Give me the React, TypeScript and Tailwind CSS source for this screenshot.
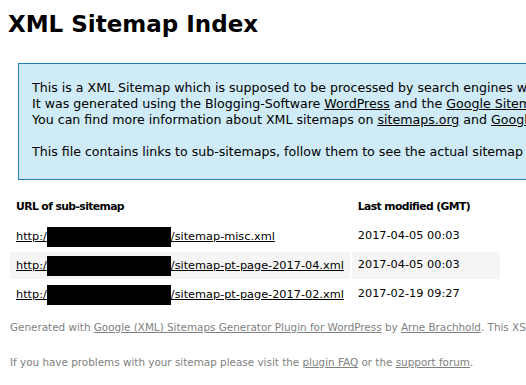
const rows = [
  { file: "sitemap-misc.xml", date: "2017-04-05 00:03", high: false },
  { file: "sitemap-pt-page-2017-04.xml", date: "2017-04-05 00:03", high: true },
  { file: "sitemap-pt-page-2017-02.xml", date: "2017-02-19 09:27", high: false },
];

export default function App() {
  return (
    <div className="w-[526px] h-[385px] overflow-hidden bg-white">
      <div className="w-[1400px] px-2 font-['DejaVu_Sans',sans-serif] text-black">
        <h1 className="pt-[9px] pb-[24px] text-[23px] leading-[30px] font-bold">XML Sitemap Index</h1>

        {/* intro box */}
        <div className="mx-[10px] border border-[#2580b2] bg-[#cfebf7] px-[13px] pt-[16px] pb-[19px] text-[12.6px] leading-[16px] whitespace-nowrap">
          <p>
            This is a XML Sitemap which is supposed to be processed by search engines which follow the XML Sitemap standard like Ask.com, Bing, Google and Yahoo.
            <br />
            It was generated using the Blogging-Software <a className="underline">WordPress</a> and the{" "}
            <a className="underline">Google Sitemap Generator Plugin</a> by <a className="underline">Arne Brachhold</a>.
            <br />
            You can find more information about XML sitemaps on <a className="underline">sitemaps.org</a> and{" "}
            <a className="underline">Google's list of sitemap programs</a>.
          </p>
          <p className="mt-[16px]">
            This file contains links to sub-sitemaps, follow them to see the actual sitemap content.
          </p>
        </div>

        {/* sitemap table */}
        <table className="mt-[12px] border-separate border-spacing-[2px] text-[11.3px]">
          <thead>
            <tr className="h-[27px]">
              <th className="w-[338px] px-[6px] text-left font-bold text-[10.8px] tracking-[-0.6px]">URL of sub-sitemap</th>
              <th className="pl-[6px] pr-[30px] text-left font-bold text-[10.8px] tracking-[-0.6px]">Last modified (GMT)</th>
            </tr>
          </thead>
          <tbody>
            {rows.map((r) => (
              <tr key={r.file} className={r.high ? "h-[27px] bg-[#f5f5f5]" : "h-[27px]"}>
                <td className="px-[6px] whitespace-nowrap">
                  <a className="underline">
                    http:/
                    <span className="inline-block w-[124px] h-[20px] bg-black align-middle"></span>
                    /{r.file}
                  </a>
                </td>
                <td className="pl-[6px] pr-[30px] whitespace-nowrap">{r.date}</td>
              </tr>
            ))}
          </tbody>
        </table>

        {/* footer */}
        <div className="mt-[10px] px-[2px] text-[10.4px] text-[#808080] leading-[14px] whitespace-nowrap">
          <p>
            Generated with <a className="underline">Google (XML) Sitemaps Generator Plugin for WordPress</a> by{" "}
            <a className="underline">Arne Brachhold</a>. This XSLT template is released under the GPL and free to use.
          </p>
          <p className="mt-[21px]">
            If you have problems with your sitemap please visit the <a className="underline">plugin FAQ</a> or the{" "}
            <a className="underline">support forum</a>.
          </p>
        </div>
      </div>
    </div>
  );
}
